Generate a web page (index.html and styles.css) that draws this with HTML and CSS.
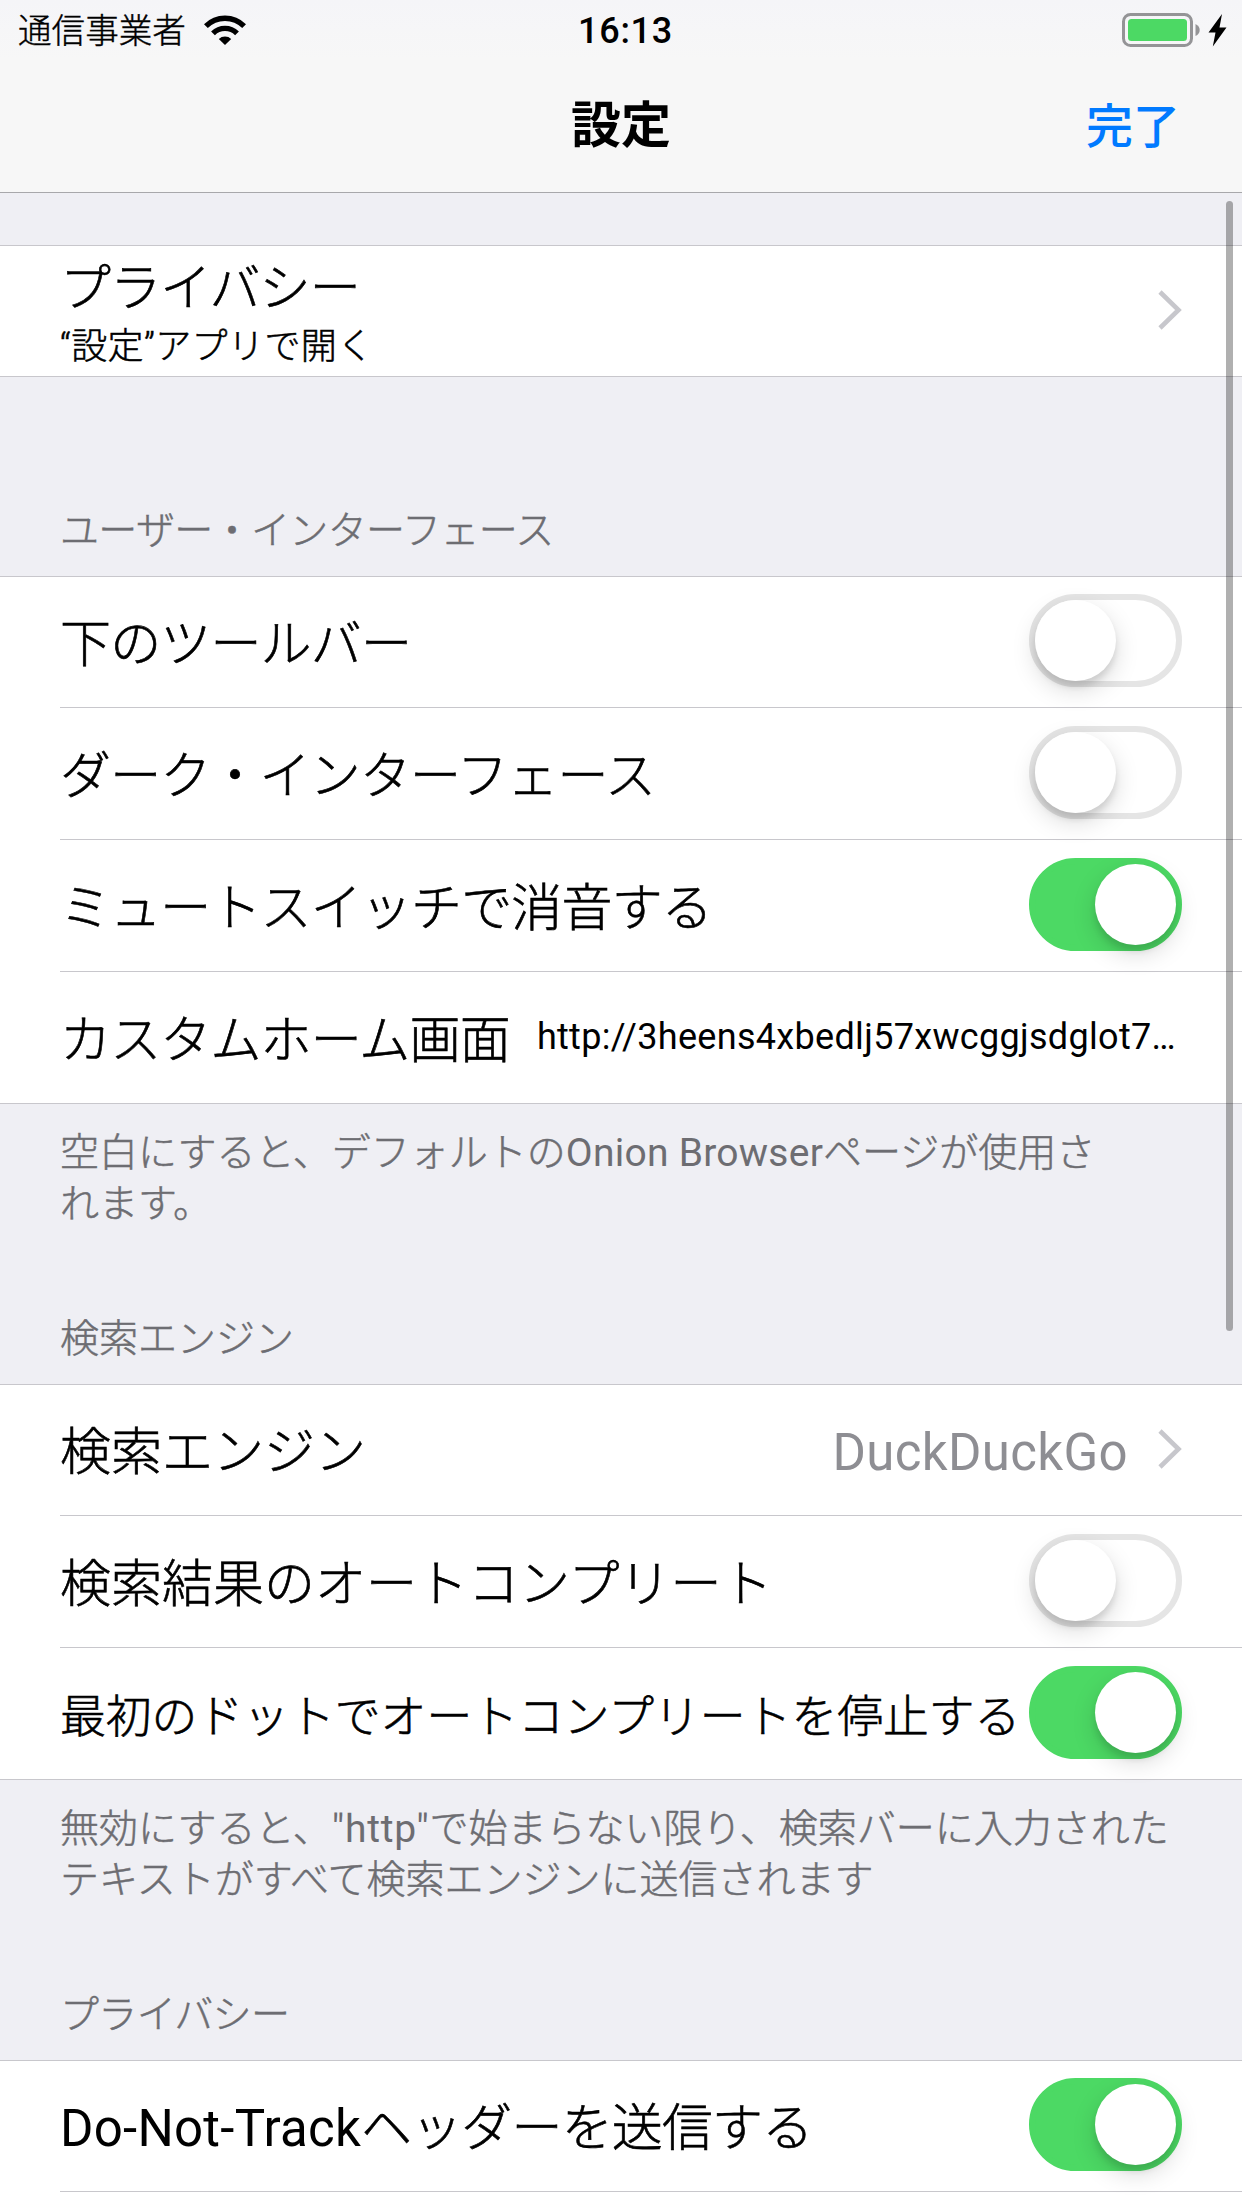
FILE: index.html
```html
<!DOCTYPE html>
<html lang="ja">
<head>
<meta charset="utf-8">
<title>設定</title>
<link rel="stylesheet" href="styles.css">
</head>
<body>
<header class="top">
  <div class="status">
    <div class="carrier">
      <span class="carrier-name">通信事業者</span>
      <svg class="wifi" width="42" height="30" viewBox="0 0 42 30">
        <g fill="none" stroke="#000" stroke-width="5.4">
          <path d="M1.9 11.1A27 27 0 0 1 40.1 11.1"/>
          <path d="M9 18.3A17 17 0 0 1 33 18.3"/>
        </g>
        <path d="M21 30L14.8 23.9A9 9 0 0 1 27.2 23.9Z"/>
      </svg>
    </div>
    <span class="time">16:13</span>
    <div class="power">
      <svg width="105" height="34" viewBox="0 0 105 34">
        <rect x="1.5" y="1.5" width="68" height="31" rx="7" fill="none" stroke="#949496" stroke-width="3"/>
        <rect x="6" y="6" width="59" height="22" rx="3.5" fill="#4cd964"/>
        <path d="M73.5 11Q77.7 13 77.7 17T73.5 23Z" fill="#949496"/>
        <path d="M100 1L86.5 19.5H93.5L90.8 33.5L104.5 14.5H97.5Z"/>
      </svg>
    </div>
  </div>
  <div class="nav">
    <h1 class="nav-title">設定</h1>
    <span class="done">完了</span>
  </div>
</header>
<main class="settings">
  <section class="group">
    <div class="row">
      <div class="stack">
        <span class="label tight">プライバシー</span>
        <span class="sub">“設定”アプリで開く</span>
      </div>
      <svg class="chevron" width="24" height="40" viewBox="0 0 24 40"><path d="M2 2L20.5 20L2 38"/></svg>
    </div>
  </section>
  <h2 class="heading first-heading tight">ユーザー・インターフェース</h2>
  <section class="group">
    <div class="row"><span class="label tight">下のツールバー</span><span class="switch"></span></div>
    <div class="row"><span class="label tight">ダーク・インターフェース</span><span class="switch"></span></div>
    <div class="row"><span class="label tight">ミュートスイッチで消音する</span><span class="switch on"></span></div>
    <div class="row"><span class="label tight">カスタムホーム画面</span><span class="url">http://3heens4xbedlj57xwcggjsdglot7…</span></div>
  </section>
  <p class="note">空白にすると、デフォルトの<span class="latin">Onion Browser</span>ページが使用さ<br>れます。</p>
  <h2 class="heading">検索エンジン</h2>
  <section class="group">
    <div class="row"><span class="label">検索エンジン</span><span class="value">DuckDuckGo</span><svg class="chevron" width="24" height="40" viewBox="0 0 24 40"><path d="M2 2L20.5 20L2 38"/></svg></div>
    <div class="row"><span class="label">検索結果のオートコンプリート</span><span class="switch"></span></div>
    <div class="row"><span class="label small">最初のドットでオートコンプリートを停止する</span><span class="switch on"></span></div>
  </section>
  <p class="note">無効にすると、<span class="latin quoted">"http"</span>で始まらない限り、検索バーに入力された<br>テキストがすべて検索エンジンに送信されます</p>
  <h2 class="heading tight">プライバシー</h2>
  <section class="group cut">
    <div class="row"><span class="label tight"><span class="latin">Do-Not-Track</span>ヘッダーを送信する</span><span class="switch on"></span></div>
    <div class="row"></div>
  </section>
</main>
<div class="scrollbar"></div>
</body>
</html>
```
FILE: styles.css
```css
* { box-sizing: border-box; }

body {
  position: relative;
  margin: 0;
  width: 1242px;
  height: 2208px;
  overflow: hidden;
  background: #efeff4;
  color: #000;
  font-family: Roboto, "Noto Sans CJK JP", sans-serif;
  font-weight: 300;
  font-kerning: normal;
}

.top {
  height: 193px;
  background: linear-gradient(#f5f5f8, #f7f7f7 60px);
  border-bottom: 1px solid #a8a8ab;
}

.status {
  display: grid;
  grid-template-columns: 1fr auto 1fr;
  align-items: center;
  height: 60px;
  padding: 0 15px 0 18px;
}
.carrier {
  display: flex;
  align-items: center;
  gap: 18px;
  font-size: 33.6px;
  -webkit-text-stroke: 0.4px;
}
.carrier-name { line-height: 57px; padding-top: 3px; }
.wifi { display: block; }
.time {
  font-size: 36px;
  font-weight: 500;
  line-height: 58px;
  letter-spacing: 0.7px;
  padding: 2px 0 0 6px;
}
.power { display: flex; justify-content: flex-end; padding-bottom: 1px; }

.nav {
  display: grid;
  grid-template-columns: 1fr auto 1fr;
  align-items: center;
  height: 132px;
  padding: 0 62px;
}
.nav-title {
  grid-column: 2;
  margin: 0;
  font-size: 50px;
  font-weight: 700;
  line-height: 132px;
}
.done {
  justify-self: end;
  padding-bottom: 7px;
  color: #007aff;
  font-size: 47px;
  font-weight: 500;
}

.settings { padding-top: 52px; }

.group {
  background: #fff;
  border-top: 1px solid #c8c7cc;
  border-bottom: 1px solid #c8c7cc;
}
.row {
  display: flex;
  align-items: center;
  height: 132px;
  margin-left: 60px;
  padding: 0 60px 2px 0;
  border-top: 1px solid #c8c7cc;
}
.row:first-child {
  height: 130px;
  padding-bottom: 3px;
  border-top: 0;
}
/* the second row is cut off by the bottom of the screen */
.cut { border-bottom: 0; }
.cut .row:last-child { height: 17px; padding: 0; }

.label {
  flex: 1;
  padding-top: 9px;
  font-size: 51px;
  line-height: 76px;
  white-space: nowrap;
  -webkit-text-stroke: 0.6px;
}
.tight { letter-spacing: -0.85px; }
.heading.tight { letter-spacing: -0.65px; }
.small { font-size: 45.8px; padding-top: 11px; }
.latin { font-weight: 400; letter-spacing: 0.25px; -webkit-text-stroke: 0; }
.quoted { letter-spacing: 0.7px; }
.stack { display: flex; flex: 1; flex-direction: column; }
.stack .label { line-height: 66px; }
.sub { font-size: 36px; line-height: 50px; letter-spacing: 0.4px; -webkit-text-stroke: 0.5px; }
.url { font-size: 36px; font-weight: 400; letter-spacing: 0.32px; padding-right: 6px; }
.value { color: #8e8e93; font-size: 51px; font-weight: 400; letter-spacing: 0.35px; margin-right: 30px; padding-top: 7px; }

.chevron { flex: none; }
.chevron path { fill: none; stroke: #c7c7cc; stroke-width: 4.6; }

.switch {
  display: flex;
  flex: none;
  width: 153px;
  height: 93px;
  border: 6px solid #e5e5e5;
  border-radius: 47px;
}
.switch::before {
  content: "";
  width: 81px;
  height: 81px;
  border-radius: 50%;
  background: #fff;
  box-shadow: 0 9px 24px rgba(0, 0, 0, 0.15), 0 6px 6px rgba(0, 0, 0, 0.1);
}
.on {
  justify-content: flex-end;
  border-color: #4cd964;
  background: #4cd964;
}

.heading, .note {
  margin: 0;
  padding-left: 60px;
  color: #6d6d72;
  font-size: 39px;
  font-weight: 300;
  line-height: 51px;
  -webkit-text-stroke: 0.5px;
}
.first-heading { padding-top: 129px; height: 199px; }
.note { height: 210px; padding-top: 24px; }
.note + .heading { height: 70px; }

.scrollbar {
  position: absolute;
  top: 201px;
  left: 1226px;
  width: 7px;
  height: 1130px;
  border-radius: 4px;
  background: rgba(0, 0, 0, 0.31);
}
```
